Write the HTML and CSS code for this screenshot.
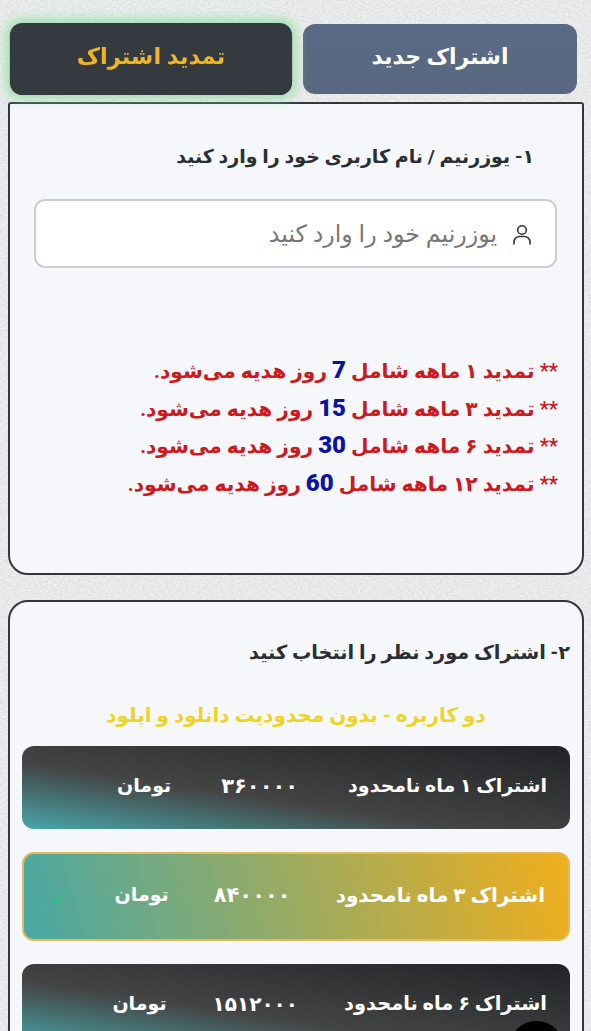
FILE: index.html
```html
<!DOCTYPE html>
<html lang="fa" dir="rtl">
<head>
    <meta charset="UTF-8">
    <meta name="viewport" content="width=device-width, initial-scale=1.0">
    <title>تمدید اشتراک</title>
    <link rel="stylesheet" href="styles.css">
</head>
<body>

<svg class="texture" aria-hidden="true">
    <filter id="paper">
        <feTurbulence type="fractalNoise" baseFrequency="0.35 0.6" numOctaves="3" seed="4"/>
        <feColorMatrix values="0 0 0 0 0.55  0 0 0 0 0.58  0 0 0 0 0.58  0.6 0.6 0 0 -0.44"/>
    </filter>
    <rect width="100%" height="100%" filter="url(#paper)"/>
</svg>

<div class="tabs">
    <button class="tab">اشتراک جدید</button>
    <button class="tab active">تمدید اشتراک</button>
</div>

<section class="card card-user">
    <h2 class="step-title">۱- یوزرنیم / نام کاربری خود را وارد کنید</h2>
    <div class="input-box">
        <svg class="user-icon" viewBox="0 0 22 22" fill="none" stroke="#333" stroke-width="1.6" stroke-linecap="round">
            <circle cx="11" cy="7" r="4.3"/>
            <path d="M3 21v-2a5.5 5.5 0 0 1 5.500-5.500h5a5.500 5.500 0 0 1 5.500 5.500v2"/>
        </svg>
        <span class="placeholder">یوزرنیم خود را وارد کنید</span>
    </div>
    <ul class="notes">
        <li>** تمدید ۱ ماهه شامل <b>7</b> روز هدیه می‌شود.</li>
        <li>** تمدید ۳ ماهه شامل <b>15</b> روز هدیه می‌شود.</li>
        <li>** تمدید ۶ ماهه شامل <b>30</b> روز هدیه می‌شود.</li>
        <li>** تمدید ۱۲ ماهه شامل <b>60</b> روز هدیه می‌شود.</li>
    </ul>
</section>

<section class="card card-plans">
    <h2 class="step-title">۲- اشتراک مورد نظر را انتخاب کنید</h2>
    <p class="plan-group">دو کاربره - بدون محدودیت دانلود و اپلود</p>

    <div class="plan">
        <span class="plan-name">اشتراک ۱ ماه نامحدود</span>
        <span class="plan-price">۳۶۰۰۰۰</span>
        <span class="plan-unit">تومان</span>
    </div>
    <div class="plan selected">
        <span class="plan-name">اشتراک ۳ ماه نامحدود</span>
        <span class="plan-price">۸۴۰۰۰۰</span>
        <span class="plan-unit">تومان</span>
        <svg class="check" viewBox="0 0 16 16" fill="none" stroke="#2fbf8a" stroke-width="2" stroke-linecap="round" stroke-linejoin="round">
            <path d="M2 8l4 5 8-11"/>
        </svg>
    </div>
    <div class="plan long">
        <span class="plan-name">اشتراک ۶ ماه نامحدود</span>
        <span class="plan-price">۱۵۱۲۰۰۰</span>
        <span class="plan-unit">تومان</span>
    </div>
</section>

<div class="float-btn"></div>

</body>
</html>
```

FILE: styles.css
```css
html, body {
    height: 100%;
    margin: 0;
    overflow: hidden;
}
body {
    font-family: Roboto, "DejaVu Sans", sans-serif;
    background-color: #eef0f0;
    color: #2b2f33;
    position: relative;
}
.texture {
    position: absolute;
    top: 0;
    left: 0;
    width: 100%;
    height: 100%;
    z-index: -1;
}
.tabs {
    display: flex;
    gap: 15px;
    padding: 24px 14px 0;
}
.tab {
    flex: 1;
    height: 70px;
    padding: 0 0 5px;
    border: none;
    border-radius: 12px;
    font-family: inherit;
    font-size: 22px;
    font-weight: bold;
    color: #fff;
    background: linear-gradient(to bottom, #5a6a85, #596880);
}
.tab.active {
    color: #efb623;
    background: #343a40;
    transform: scale(1.03);
    box-shadow: 0 0 10px 3px #9fe0ae;
}
.card {
    margin: 0 7px 0 8px;
    background-color: #f5f7fb;
    border: 2px solid #33373b;
    box-sizing: border-box;
}
.card-user {
    margin-top: 8px;
    height: 473px;
    padding-top: 33px;
    border-radius: 3px 3px 20px 20px;
}
.card-plans {
    margin-top: 25px;
    padding: 0 12px;
    border-radius: 20px 20px 0 0;
    height: 480px;
}
.step-title {
    margin: 0;
    font-size: 19px;
    font-weight: bold;
    line-height: 40px;
}
.card-user .step-title {
    padding-right: 48px;
}
.card-plans .step-title {
    padding-top: 31px;
    font-size: 19.3px;
}
.input-box {
    display: flex;
    align-items: center;
    gap: 14px;
    height: 69px;
    box-sizing: border-box;
    margin: 22px 25px 0 24px;
    padding: 0 22px 0 16px;
    background-color: #fff;
    border: 2.5px solid #cdcdcd;
    border-radius: 11px;
}
.user-icon {
    width: 22px;
    height: 22px;
}
.placeholder {
    font-size: 23.7px;
    color: #777;
}
.notes {
    list-style: none;
    margin: 0;
    padding: 85px 24px 0 0;
    font-size: 20.2px;
    font-weight: bold;
    line-height: 37.7px;
    color: #cc1a1f;
}
.notes b {
    color: #0a12a8;
    font-size: 24px;
    line-height: 1;
}
.plan-group {
    margin: 0;
    padding-top: 28px;
    text-align: center;
    font-size: 20px;
    font-weight: bold;
    line-height: 28px;
    color: #efd426;
}
.plan {
    display: flex;
    align-items: center;
    gap: 50px;
    height: 83px;
    box-sizing: border-box;
    margin-top: 17px;
    padding: 0 23px 4px;
    border-radius: 12px;
    color: #fff;
    font-size: 19px;
    font-weight: bold;
    background: linear-gradient(to bottom left, #202326, #444 60%, #48a6a9);
}
.plan + .plan {
    margin-top: 23px;
}
.plan-price {
    font-size: 21px;
}
.plan-unit {
    font-size: 19px;
}
.plan.selected {
    position: relative;
    height: 89px;
    gap: 45px;
    font-size: 20px;
    border: 2.5px solid #e2b95c;
    background: linear-gradient(255deg, #f0ae1c, #48a8a5);
}
.plan.long {
    gap: 46px;
    font-size: 19.4px;
}
.plan.long .plan-price {
    font-size: 20px;
}
.check {
    position: absolute;
    left: 27px;
    top: 36px;
    width: 15px;
    height: 15px;
}
.float-btn {
    position: absolute;
    left: 509px;
    top: 1021px;
    width: 55px;
    height: 55px;
    border-radius: 50%;
    background-color: #000;
}
```
